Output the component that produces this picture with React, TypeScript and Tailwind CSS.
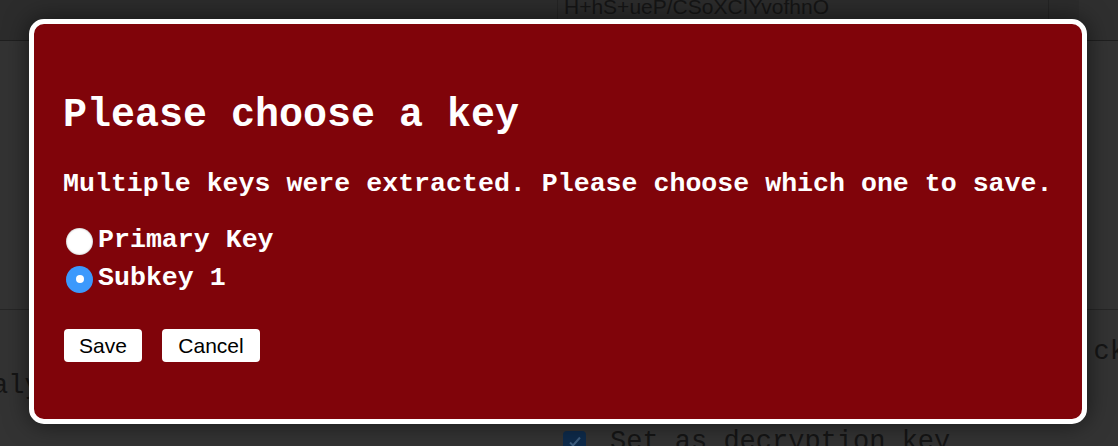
import React, { useState } from "react";

const mono = "font-['Liberation_Mono','Courier_New',monospace]";
const sans = "font-['Liberation_Sans',Arial,sans-serif]";

const App: React.FC = () => {
  const [pilihan, setPilihan] = useState<"primary" | "sub1">("sub1");

  return (
    <div className="relative h-[446px] w-[1118px] overflow-hidden bg-[#333333]">
      {/* latar belakang (halaman di balik overlay) */}
      <div className="flex h-[41px] border-b border-[#1f1f1f] bg-[#2c2c2c]">
        <div className="ml-[557px] flex h-[20px] w-[492px] items-end border-x border-b border-[#242424] px-[6px]">
          <span className={`${sans} text-[21px] leading-[24px] text-[#151515]`}>
            H+hS+ueP/CSoXCIYvofhnO
          </span>
        </div>
        <div className="ml-[30px] h-full flex-1 bg-[#2f2f2f]" />
      </div>
      <div className="h-[269px] border-b border-[#262626]" />
      <div className="flex justify-between">
        <span className={`${mono} -ml-[8px] mt-[56px] text-[27px] text-[#151515]`}>aly</span>
        <span className={`${mono} -mr-[8px] mt-[22px] text-[27px] text-[#151515]`}>ck</span>
      </div>
      <div className="absolute left-[563px] top-[427px] flex items-center gap-[24px]">
        <div className="flex h-[23px] w-[23px] items-center justify-center rounded-[4px] bg-[#0e2b4b]">
          <svg width="16" height="16" viewBox="0 0 16 16" fill="none">
            <path d="M3 8.5l3 3 7-8" stroke="#3d5d7e" strokeWidth="2" />
          </svg>
        </div>
        <span className={`${mono} text-[27px] leading-[30px] text-[#151515]`}>Set as decryption key</span>
      </div>

      {/* dialog */}
      <div className="absolute left-[29px] top-[19px] h-[405px] w-[1058px] rounded-[15px] border-[5px] border-white bg-[#80040a] shadow-[0_0_24px_rgba(0,0,0,0.55)]">
        <div className="px-[29px] pt-[68px]">
          <h1 className={`${mono} text-[40px] font-bold leading-[48px] text-white`}>Please choose a key</h1>
          <p className={`${mono} mt-[27px] whitespace-nowrap text-[26.6px] font-bold leading-[34px] text-white`}>
            Multiple keys were extracted. Please choose which one to save.
          </p>

          <div className="mt-[21px] flex flex-col">
            {[
              { id: "primary", label: "Primary Key" },
              { id: "sub1", label: "Subkey 1" },
            ].map((k) => (
              <label key={k.id} className="flex h-[38px] items-center">
                <span
                  onClick={() => setPilihan(k.id as any)}
                  className={`ml-[3px] flex h-[27px] w-[27px] items-center justify-center rounded-full ${
                    pilihan === k.id ? "bg-[#3c99fc]" : "bg-white shadow-[inset_0_0_2px_rgba(0,0,0,0.4)]"
                  }`}
                >
                  {pilihan === k.id && <span className="h-[8px] w-[8px] rounded-full bg-white" />}
                </span>
                <span className={`${mono} ml-[5px] text-[26.6px] font-bold text-white`}>{k.label}</span>
              </label>
            ))}
          </div>

          <div className="ml-[1px] mt-[31px] flex gap-[20px]">
            <button className={`${sans} h-[33px] w-[78px] rounded-[4px] bg-white text-[21px] text-black`}>Save</button>
            <button className={`${sans} h-[33px] w-[98px] rounded-[4px] bg-white text-[21px] text-black`}>Cancel</button>
          </div>
        </div>
      </div>
    </div>
  );
};

export default App;
